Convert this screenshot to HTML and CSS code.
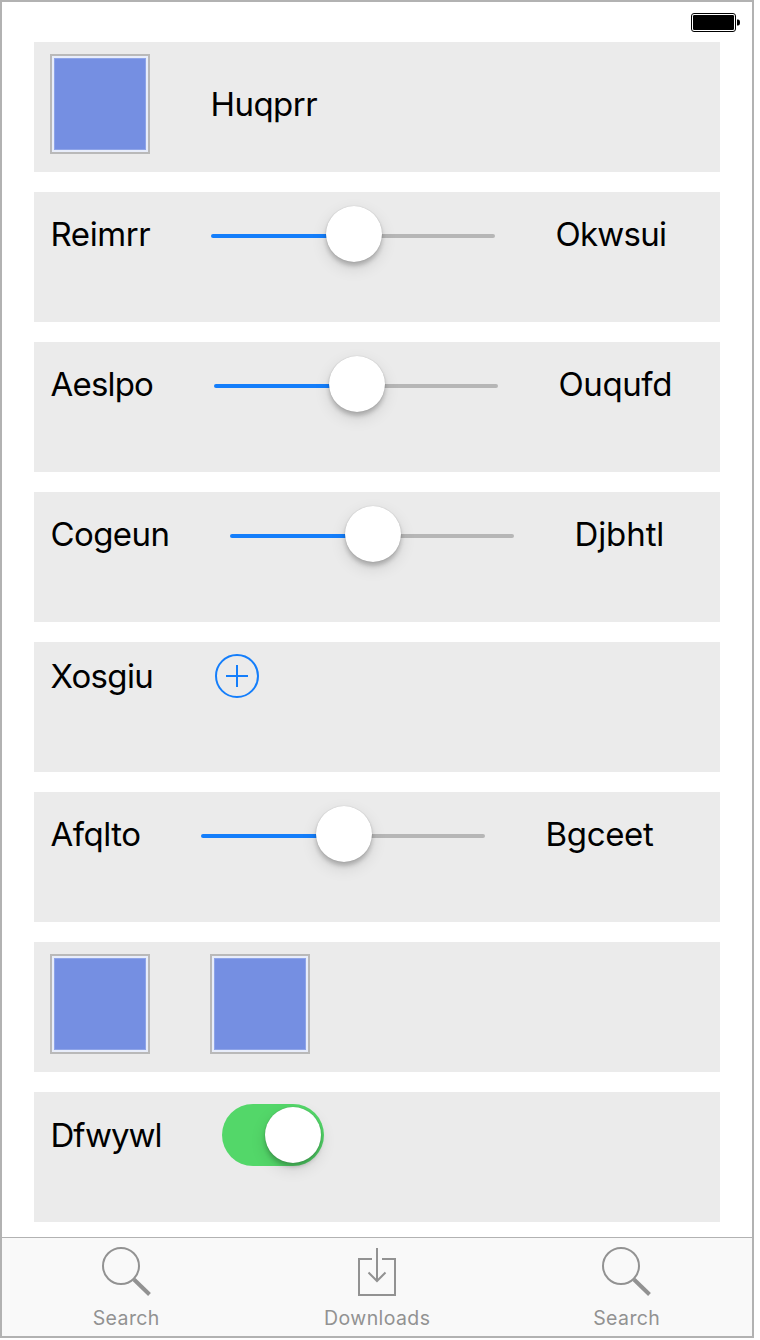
FILE: index.html
```html
<!DOCTYPE html>
<html lang="en">
<head>
<meta charset="utf-8">
<title>Controls</title>
<link rel="stylesheet" href="styles.css">
</head>
<body>
<div class="phone">
  <header class="status">
    <svg width="50" height="20" viewBox="0 0 50 20">
      <rect x=".5" y=".5" width="44" height="18" rx="2.5" fill="#fff" stroke="#000"/>
      <rect x="2" y="2" width="41" height="15" rx="1.2"/>
      <path d="M46 6.5h1q2 0 2 3t-2 3h-1z"/>
    </svg>
  </header>
  <main class="rows">
    <section class="row"><i class="swatch"></i><span class="label huqprr">Huqprr</span></section>
    <section class="row slide"><span class="label reimrr">Reimrr</span><div class="slider"><i class="thumb"></i></div><span class="label okwsui">Okwsui</span></section>
    <section class="row slide"><span class="label aeslpo">Aeslpo</span><div class="slider"><i class="thumb"></i></div><span class="label ouqufd">Ouqufd</span></section>
    <section class="row slide"><span class="label cogeun">Cogeun</span><div class="slider"><i class="thumb"></i></div><span class="label djbhtl">Djbhtl</span></section>
    <section class="row"><span class="label xosgiu">Xosgiu</span>
      <svg class="add" width="44" height="44" viewBox="0 0 44 44" fill="none" stroke="#147efb" stroke-width="2"><circle cx="22" cy="22" r="21"/><path d="M11 22h22M22 11v22"/></svg>
    </section>
    <section class="row slide"><span class="label afqlto">Afqlto</span><div class="slider"><i class="thumb"></i></div><span class="label bgceet">Bgceet</span></section>
    <section class="row"><i class="swatch"></i><i class="swatch"></i></section>
    <section class="row"><span class="label dfwywl">Dfwywl</span><div class="switch"><i class="thumb"></i></div></section>
  </main>
  <nav class="tabs">
    <div class="tab search">
      <svg width="50" height="52" viewBox="0 0 50 52" fill="none" stroke="#929292"><circle cx="20" cy="20" r="18" stroke-width="2"/><path d="M33 33.5L48.500 48.500" stroke-width="4"/></svg>
      <span>Search</span>
    </div>
    <div class="tab downloads">
      <svg width="50" height="52" viewBox="0 0 50 52" fill="none" stroke="#929292" stroke-width="2"><path d="M20 13H7v36h36V13H30M25 2v33M16.500 26.500L25 35l8.500-8.500"/></svg>
      <span>Downloads</span>
    </div>
    <div class="tab search last">
      <svg width="50" height="52" viewBox="0 0 50 52" fill="none" stroke="#929292"><circle cx="20" cy="20" r="18" stroke-width="2"/><path d="M33 33.5L48.500 48.500" stroke-width="4"/></svg>
      <span>Search</span>
    </div>
  </nav>
</div>
</body>
</html>
```
FILE: styles.css
```css
* { box-sizing: border-box; }
body { margin: 0; background: #fff; font-family: Inter, "Liberation Sans", sans-serif; }
.phone { width: 754px; height: 1338px; border: 2px solid #b2b2b2; display: flex; flex-direction: column; }
.status { height: 40px; flex: none; display: flex; justify-content: flex-end; padding: 11px 11px 0 0; }
.rows { flex: 1; display: flex; flex-direction: column; gap: 20px; padding: 0 32px; }
.row { height: 130px; flex: none; background: #ebebeb; display: flex; gap: 60px; align-items: center; padding: 12px 16px 18px; }
.slide { padding-top: 14px; padding-bottom: 60px; }
.row:nth-child(5) { padding-bottom: 74px; }
.row:nth-child(8) { padding-bottom: 56px; }
.label { font-size: 33px; line-height: 40px; white-space: nowrap; color: #000; flex: none; text-indent: .5px; }
.swatch { width: 100px; height: 100px; flex: none; border: 2px solid #b9b9b9; background: #758fe2; box-shadow: inset 0 0 0 2px #e8edfa, inset 0 0 0 3px #8ea4e8; }
.slider { width: 284px; height: 56px; flex: none; position: relative; display: flex; align-items: center; justify-content: center; padding-left: 2px; }
.slider::before { content: ""; position: absolute; left: 0; right: 0; top: 28px; height: 4px; border-radius: 2px; background: linear-gradient(90deg, #147efb 50%, #b6b6b6 50%); }
.thumb { position: relative; width: 56px; height: 56px; border-radius: 50%; background: #fff; box-shadow: 0 0 1px rgba(0,0,0,.25), 0 4px 4px rgba(0,0,0,.2), 0 6px 16px rgba(0,0,0,.12); }
.add { flex: none; }
.switch { width: 102px; height: 62px; border-radius: 31px; background: #53d769; padding: 3px; display: flex; justify-content: flex-end; }
.huqprr { width: 108px; letter-spacing: -.55px; }
.reimrr { width: 101px; letter-spacing: -.4px; }
.okwsui { letter-spacing: -.75px; }
.aeslpo { width: 104px; letter-spacing: -.8px; }
.ouqufd { letter-spacing: -.4px; }
.cogeun { width: 120px; letter-spacing: -.6px; }
.djbhtl { letter-spacing: -.1px; }
.xosgiu { width: 105px; letter-spacing: -.65px; }
.afqlto { width: 91px; letter-spacing: -.5px; }
.bgceet { letter-spacing: -.35px; }
.dfwywl { width: 112px; letter-spacing: -1px; }
.tabs { height: 99px; flex: none; border-top: 1px solid #b2b2b2; background: #f9f9f9; display: grid; grid-template-columns: 248px 254px 245px; color: #929292; }
.tab { display: flex; flex-direction: column; align-items: center; padding-top: 8px; font-size: 19.5px; line-height: 24px; letter-spacing: .4px; }
.tab span { margin-top: 8px; text-indent: .5px; }
.last svg { margin-right: 1px; }
```
